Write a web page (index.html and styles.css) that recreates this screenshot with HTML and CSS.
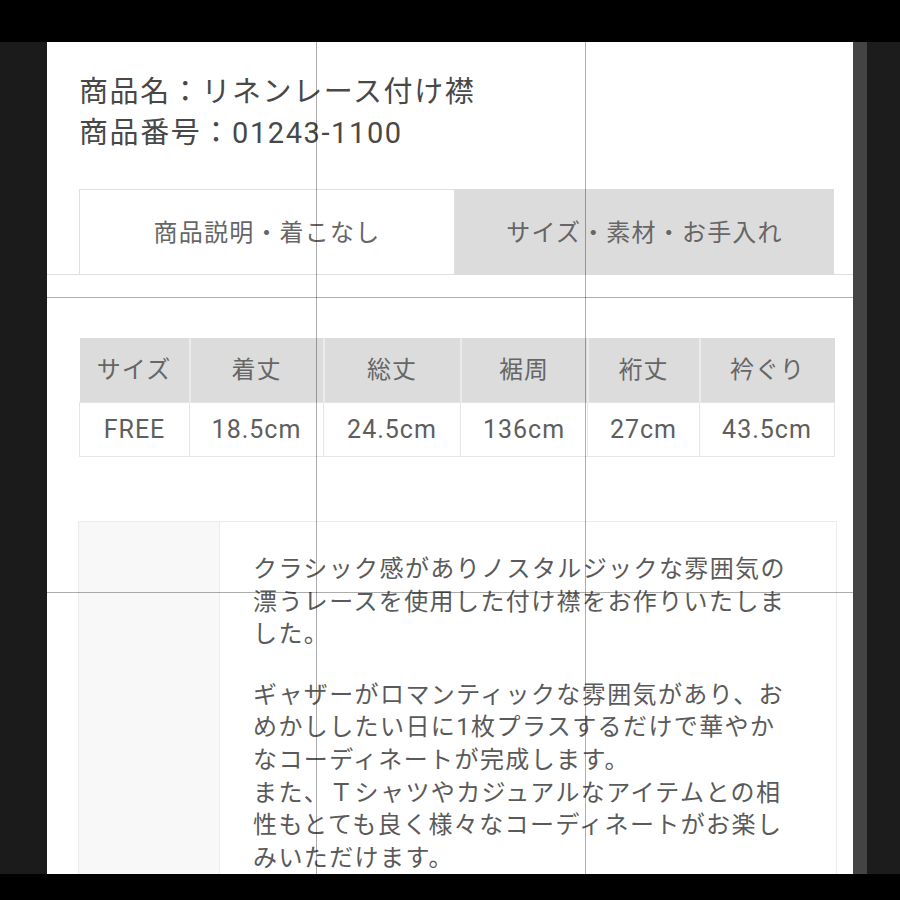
FILE: index.html
```html
<!DOCTYPE html>
<html lang="ja">
<head>
<meta charset="utf-8">
<link rel="stylesheet" href="styles.css">
</head>
<body>
<div class="topbar"></div>
<div class="middle">
  <div class="leftside"></div>
  <div class="panel">
    <div class="title">
      <div>商品名：リネンレース付け襟</div>
      <div>商品番号：01243-1100</div>
    </div>
    <div class="tabbar">
      <div class="tab active">商品説明・着こなし</div>
      <div class="tab">サイズ・素材・お手入れ</div>
    </div>
    <table class="size">
      <colgroup>
        <col class="c1"><col class="c2"><col class="c3"><col class="c4"><col class="c5"><col class="c6">
      </colgroup>
      <thead>
        <tr><th>サイズ</th><th>着丈</th><th>総丈</th><th>裾周</th><th>裄丈</th><th>衿ぐり</th></tr>
      </thead>
      <tbody>
        <tr><td>FREE</td><td>18.5cm</td><td>24.5cm</td><td>136cm</td><td>27cm</td><td>43.5cm</td></tr>
      </tbody>
    </table>
    <div class="desc">
      <div class="desc-side"></div>
      <div class="desc-body">
        <p>クラシック感がありノスタルジックな雰囲気の漂うレースを使用した付け襟をお作りいたしました。</p>
        <p>ギャザーがロマンティックな雰囲気があり、おめかししたい日に1枚プラスするだけで華やかなコーディネートが完成します。<br>また、Ｔシャツやカジュアルなアイテムとの相性もとても良く様々なコーディネートがお楽しみいただけます。</p>
      </div>
    </div>
    <div class="grid v1"></div>
    <div class="grid v2"></div>
    <div class="grid h1"></div>
    <div class="grid h2"></div>
  </div>
  <div class="rightside"></div>
</div>
<div class="bottombar"></div>
</body>
</html>
```
FILE: styles.css
```css
html, body {
  margin: 0;
  padding: 0;
  background: #1c1c1c;
  font-family: Roboto, "Noto Sans CJK JP", sans-serif;
}
.topbar {
  height: 42px;
  background: #000;
}
.bottombar {
  height: 26px;
  background: #000;
}
.middle {
  display: flex;
  height: 832px;
}
.leftside {
  width: 47px;
  background: #1b1b1b;
}
.rightside {
  width: 14px;
  background: #444;
}
.panel {
  width: 806px;
  height: 832px;
  box-sizing: border-box;
  background: #fff;
  position: relative;
  overflow: hidden;
  padding: 30px 19px 0 32px;
  color: #555;
}
.title {
  font-size: 29px;
  line-height: 41px;
  letter-spacing: 1.6px;
  color: #484848;
}
.tabbar {
  display: flex;
  margin: 35px -19px 0 -32px;
  padding: 0 19px 0 32px;
  border-bottom: 1px solid #dedede;
}
.tab {
  height: 85px;
  margin-bottom: -1px;
  padding-bottom: 3px;
  box-sizing: border-box;
  display: flex;
  align-items: center;
  justify-content: center;
  font-size: 24px;
  letter-spacing: 1.2px;
  color: #666;
}
.tab.active {
  width: 376px;
  background: #fff;
  border: 1px solid #e0e0e0;
  border-bottom: none;
}
.tab:not(.active) {
  flex: 1;
  background: #dcdcdc;
  height: 86px;
}
.size {
  width: 755px;
  margin-top: 63px;
  border-collapse: collapse;
  table-layout: fixed;
}
.c1 { width: 110px; }
.c2 { width: 134px; }
.c3 { width: 137px; }
.c4 { width: 127px; }
.c5 { width: 112px; }
.c6 { width: 135px; }
.size th {
  height: 64px;
  padding: 0;
  background: #dcdcdc;
  border-left: 2px solid #ebebeb;
  font-weight: normal;
  font-size: 24px;
  line-height: 30px;
  letter-spacing: 1px;
  color: #666;
}
.size th:first-child { border-left: none; }
.size td {
  height: 53px;
  padding: 0;
  text-align: center;
  border: 1px solid #e6e6e6;
  font-size: 25px;
  line-height: 30px;
  letter-spacing: 1px;
  color: #5e5e5e;
}
.desc {
  display: flex;
  margin-top: 64px;
  width: 757px;
  margin-left: -1px;
  height: 500px;
  border: 1px solid #ececec;
}
.desc-side {
  width: 140px;
  background: #f8f8f8;
  border-right: 1px solid #ececec;
}
.desc-body {
  flex: 1;
  padding: 31px 40px 0 33px;
  font-size: 24px;
  letter-spacing: 1.4px;
  line-height: 32.6px;
  color: #5a5a5a;
}
.desc-body p {
  margin: 0 0 28px 0;
}
.grid {
  position: absolute;
  background: rgba(0, 0, 0, 0.32);
}
.grid.v1, .grid.v2 {
  top: 0;
  bottom: 0;
  width: 1px;
}
.grid.v1 { left: 269px; }
.grid.v2 { left: 538px; }
.grid.h1, .grid.h2 {
  left: 0;
  right: 0;
  height: 1px;
}
.grid.h1 { top: 255px; }
.grid.h2 { top: 550px; }
```
